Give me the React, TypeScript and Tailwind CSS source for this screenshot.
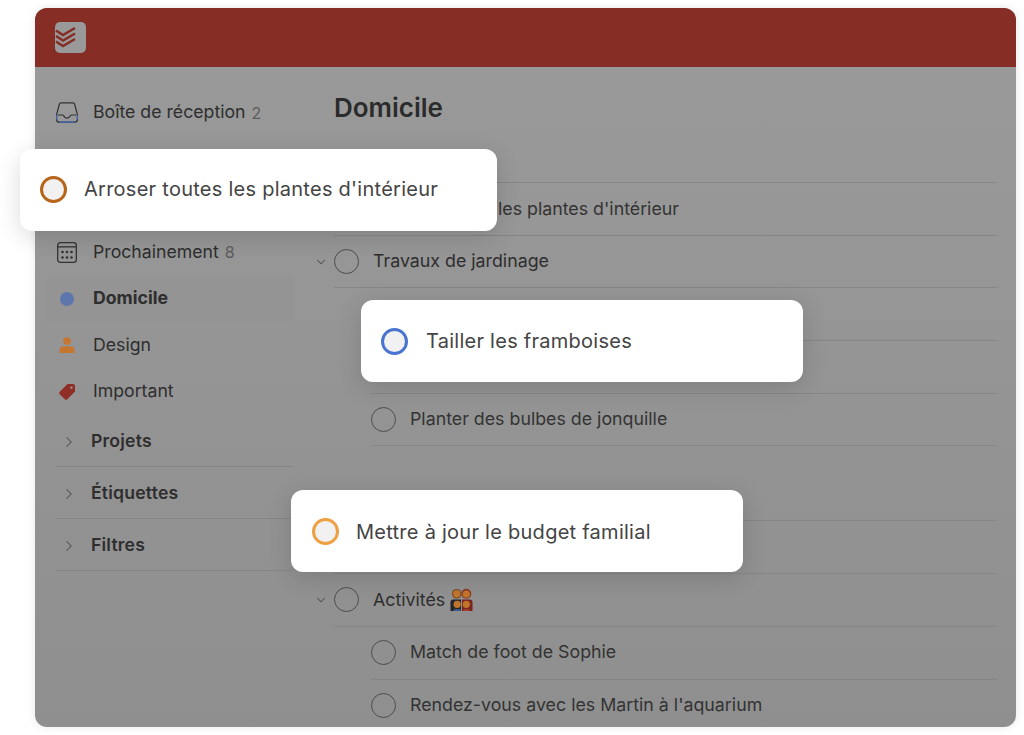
import { ChevronDown, ChevronRight } from "lucide-react"

function LogoIcon() {
  return (
    <div className="flex size-[31px] items-center justify-center rounded-[5px] bg-[#999999]">
      <svg viewBox="0 0 31 31" className="size-[31px]" fill="none" stroke="#862d26" strokeWidth="2.6">
        <path d="M1 8.5 L8 13 L20 6" />
        <path d="M1 14 L8 18.5 L20 11.5" />
        <path d="M1 19.5 L8 24 L20 17" />
      </svg>
    </div>
  )
}

function InboxIcon() {
  return (
    <svg viewBox="0 0 22 21" className="h-[21px] w-[22px]" fill="none" strokeWidth="1.2">
      <path d="M5 0.8 H17 Q18.2 0.8 18.6 2 L21.2 12 Q21.4 13 21.4 14 V17.5 Q21.4 20.2 18.8 20.2 H3.2 Q0.6 20.2 0.6 17.5 V14 Q0.6 13 0.8 12 L3.4 2 Q3.8 0.8 5 0.8 Z" stroke="#333333" />
      <path d="M2 13 H6.5 Q7.3 13 7.7 13.8 Q8.8 16.2 11 16.2 Q13.2 16.2 14.3 13.8 Q14.7 13 15.5 13 H20" stroke="#333333" />
      <path d="M3.2 20.2 H18.8" stroke="#3f66b8" />
      <path d="M0.6 13.5 V17.5 M21.4 13.5 V17.5" stroke="#3f66b8" />
    </svg>
  )
}

function CalendarIcon() {
  return (
    <svg viewBox="0 0 20 21" className="h-[21px] w-[20px]" fill="#333333">
      <rect x="0.7" y="0.7" width="18.6" height="19.6" rx="2.5" fill="none" stroke="#333333" strokeWidth="1.3" />
      <rect x="1" y="4.2" width="18" height="1.3" />
      <circle cx="5.5" cy="10" r="1.3" />
      <circle cx="10" cy="10" r="1.3" />
      <circle cx="14.5" cy="10" r="1.3" />
      <circle cx="5.5" cy="15.5" r="1.3" />
      <circle cx="10" cy="15.5" r="1.3" />
      <circle cx="14.5" cy="15.5" r="1.3" />
    </svg>
  )
}

function PersonIcon() {
  return (
    <svg viewBox="0 0 16 16" className="size-[16px]" fill="#c5762f">
      <circle cx="8" cy="4" r="3.8" />
      <path d="M0.5 16 V13.5 Q0.5 9.2 5 9.2 H11 Q15.5 9.2 15.5 13.5 V16 Z" />
    </svg>
  )
}

function TagIcon() {
  return (
    <svg viewBox="0 0 18 18" className="size-[18px]">
      <path d="M9.5 1 H15 Q17 1 17 3 V8.5 L9 16.5 Q8 17.4 7 16.5 L1.5 11 Q0.6 10 1.5 9 Z" fill="#8f2d27" />
      <circle cx="13.4" cy="4.6" r="1.2" fill="#999999" />
    </svg>
  )
}

function FamilyEmoji() {
  return (
    <svg viewBox="0 0 24 24" className="h-[23px] w-[23px]">
      <circle cx="7" cy="6" r="5" fill="#7a4a24" />
      <circle cx="7" cy="6" r="3.8" fill="#c0752a" />
      <circle cx="17" cy="6" r="5.2" fill="#8a3a28" />
      <circle cx="17" cy="6.4" r="3.7" fill="#c0752a" />
      <path d="M0.5 24 V15 Q0.5 12 3.5 12 H11.5 V24 Z" fill="#26262a" />
      <path d="M12.5 24 V12 H20.5 Q23.5 12 23.5 15 V24 Z" fill="#7c2520" />
      <circle cx="7.5" cy="17" r="3.8" fill="#c0752a" />
      <circle cx="17" cy="17" r="3.8" fill="#c0752a" />
      <path d="M4 24 V22 H11 V24 Z" fill="#3d5a8a" />
      <path d="M14 24 V22 H20 V24 Z" fill="#a33f2c" />
    </svg>
  )
}

function SideItem({ icon, label, count, active }: { icon: React.ReactNode; label: string; count?: string; active?: boolean }) {
  return (
    <div className={"flex h-[46.5px] items-center rounded-l-md pl-[5px] " + (active ? "bg-[#949494]" : "")}>
      <div className="flex w-[42px] justify-center pr-[10px]">{icon}</div>
      <span className={"text-[17.7px] text-[#2e2e2e] " + (active ? "font-bold" : "")}>{label}</span>
      {count && <span className="ml-[6px] text-[16px] text-[#5d5d5d]">{count}</span>}
    </div>
  )
}

function SideGroup({ label }: { label: string }) {
  return (
    <div className="ml-[10px] flex h-[52px] items-center border-b border-[#858585] pl-[4px] pt-[2px]">
      <ChevronRight className="size-[18px] text-[#4f4f4f]" strokeWidth={1.4} />
      <span className="ml-[13px] text-[17.6px] font-semibold tracking-[0.2px] text-[#2e2e2e]">{label}</span>
    </div>
  )
}

function Circle() {
  return <div className="size-[25px] shrink-0 rounded-full border-[1.5px] border-[#4d4d4d]" />
}

function ParentRow({ label, children }: { label?: string; children?: React.ReactNode }) {
  return (
    <div className="flex h-[52.7px] shrink-0 items-center border-b border-[#868686]">
      <ChevronDown className="size-[14px] text-[#4f4f4f] ml-[-20px] mr-[6px]" strokeWidth={1.8} />
      <Circle />
      <span className="ml-[14px] flex items-center gap-[5px] text-[17.8px] text-[#2e2e2e]">
        {label}
        {children}
      </span>
    </div>
  )
}

function Row({ label, sub }: { label?: string; sub?: boolean }) {
  return (
    <div className={"flex h-[52.7px] shrink-0 items-center border-b border-[#868686] " + (sub ? "ml-[37px]" : "")}>
      {label && <Circle />}
      {label && <span className="ml-[14px] text-[17.8px] text-[#333333]">{label}</span>}
    </div>
  )
}

function FloatCard({ label, pos, ring, gap }: { label: string; pos: string; ring: string; gap: string }) {
  return (
    <div className={"absolute flex h-[82px] items-center rounded-[12px] bg-white shadow-[0_6px_24px_rgba(0,0,0,0.14)] " + pos}>
      <div className={"size-[27px] shrink-0 rounded-full border-[3px] bg-[#f1f1f1] " + ring} />
      <span className={"whitespace-nowrap text-[20px] tracking-[0.26px] text-[#444444] " + gap}>{label}</span>
    </div>
  )
}

export default function App() {
  return (
    <div className="relative h-[735px] w-[1024px] overflow-hidden bg-white pl-[35px] pr-[8px] pt-[8px] font-['Inter',sans-serif]">
      <div className="flex h-[719px] w-[981px] flex-col overflow-hidden rounded-[12px] bg-gradient-to-b from-[#9a9a9a] to-[#8f8f8f] shadow-[0_0_8px_rgba(0,0,0,0.1)]">
        {/* Header */}
        <div className="flex h-[59px] shrink-0 items-center bg-[#862d26] pl-[20px]">
          <LogoIcon />
        </div>

        <div className="flex min-h-0 flex-1">
          {/* Sidebar */}
          <div className="w-[258px] shrink-0 pl-[11px] pt-[22.5px]">
            <SideItem icon={<InboxIcon />} label="Boîte de réception" count="2" />
            <div className="h-[93px]" />
            <SideItem icon={<CalendarIcon />} label="Prochainement" count="8" />
            <SideItem active icon={<div className="size-[14px] rounded-full bg-[#5d77ad]" />} label="Domicile" />
            <SideItem icon={<PersonIcon />} label="Design" />
            <SideItem icon={<TagIcon />} label="Important" />
            <SideGroup label="Projets" />
            <SideGroup label="Étiquettes" />
            <SideGroup label="Filtres" />
          </div>

          {/* Project */}
          <div className="min-w-0 flex-1 pl-[41px] pr-[19px]">
            <h1 className="flex h-[80px] items-center text-[26px] font-semibold text-[#2b2b2b]">Domicile</h1>
            <div className="h-[36px] border-b border-[#868686]" />
            <Row label="Arroser toutes les plantes d'intérieur" />
            <ParentRow label="Travaux de jardinage" />
            <Row sub />
            <Row sub />
            <Row sub label="Planter des bulbes de jonquille" />
            <div className="ml-[37px] h-[75px] border-b border-[#868686]" />
            <Row />
            <ParentRow label="Activités">
              <FamilyEmoji />
            </ParentRow>
            <Row sub label="Match de foot de Sophie" />
            <Row sub label="Rendez-vous avec les Martin à l'aquarium" />
          </div>
        </div>
      </div>

      {/* Floating tasks */}
      <FloatCard label="Arroser toutes les plantes d'intérieur" pos="left-[20px] top-[149px] w-[477px] pb-[2px] pl-[20px]" gap="ml-[17px]" ring="border-[#b8651c]" />
      <FloatCard label="Tailler les framboises" pos="left-[361px] top-[300px] w-[442px] pl-[20px]" gap="ml-[18px]" ring="border-[#4a74d0]" />
      <FloatCard label="Mettre à jour le budget familial" pos="left-[291px] top-[490px] w-[452px] pl-[21px] pt-[1px]" gap="ml-[17px]" ring="border-[#eda044]" />
    </div>
  )
}
